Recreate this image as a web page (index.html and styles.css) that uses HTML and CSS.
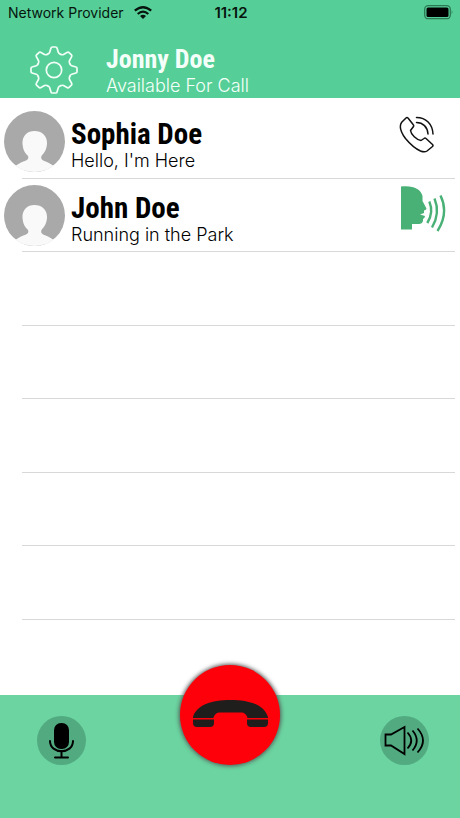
FILE: index.html
```html
<!DOCTYPE html>
<html lang="en">
<head>
<meta charset="utf-8">
<meta name="viewport" content="width=device-width, initial-scale=1">
<title>Contacts</title>
<link rel="stylesheet" href="styles.css">
</head>
<body>
<svg class="defs" aria-hidden="true">
  <symbol id="avatar" viewBox="0 0 61 61">
    <clipPath id="disc"><circle cx="30.5" cy="30.5" r="30.5"/></clipPath>
    <g clip-path="url(#disc)">
      <rect width="61" height="61" fill="#a9a9a9"/>
      <path d="M18.500 33C18 25 23 20 30.500 20S43.500 25 43 33C42.500 39 40 42 37.500 45C36 49 40 50 44 51.500L50 55V63H11V55L17 51.500C21 50 25.500 49 24 45C21 42 19 39 18.500 33Z" fill="#f9f9f9"/>
      <path d="M5 59L20 50.500V63H5ZM56 59L41 50.500V63H56Z" fill="#f9f9f9"/>
    </g>
  </symbol>
</svg>
<div class="app">
  <header class="top">
    <div class="status">
      <span class="carrier">Network Provider
        <svg width="18" height="13" viewBox="0 0 18 13" aria-hidden="true"><g fill="none" stroke="#07150e" stroke-width="2.300"><path d="M.8 4.700Q9-2.300 17.200 4.700"/><path d="M3.700 8Q9 3.300 14.300 8"/></g><path d="M6 10Q9 7.400 12 10L9 13Z" fill="#07150e"/></svg>
      </span>
      <time class="clock">11:12</time>
      <svg class="battery" width="30" height="15" viewBox="0 0 30 15" aria-hidden="true"><rect x=".7" y=".7" width="25.600" height="13" rx="3.500" fill="none" stroke="#2c7955" stroke-width="1.300"/><rect x="2.500" y="2.500" width="22" height="9.400" rx="1.500"/><path d="M27.700 5Q29.500 7.200 27.700 9.400Z" fill="#2c7955"/></svg>
    </div>
    <div class="profile">
      <button class="plain" aria-label="Settings">
        <svg width="48" height="48" viewBox="-24 -24 48 48" fill="none" stroke="#f2fff8" stroke-width="1.700" stroke-linejoin="round" stroke-linecap="round">
          <defs><path id="tooth" d="M-6.500-15.700Q-4.700-16.300-4.300-17.700L-3-22Q-2.700-23-1.700-23H1.700Q2.700-23 3-22L4.300-17.700Q4.700-16.300 6.500-15.700"/></defs>
          <use href="#tooth"/><use href="#tooth" transform="rotate(45)"/><use href="#tooth" transform="rotate(90)"/><use href="#tooth" transform="rotate(135)"/><use href="#tooth" transform="rotate(180)"/><use href="#tooth" transform="rotate(225)"/><use href="#tooth" transform="rotate(270)"/><use href="#tooth" transform="rotate(315)"/>
          <circle r="7.700"/>
        </svg>
      </button>
      <div class="info">
        <h1 class="name">Jonny Doe</h1>
        <p class="note">Available For Call</p>
      </div>
    </div>
  </header>
  <main class="main">
    <ul class="list">
      <li class="row">
        <svg class="avatar" aria-hidden="true"><use href="#avatar"/></svg>
        <div class="info">
          <h2 class="name">Sophia Doe</h2>
          <p class="note">Hello, I'm Here</p>
        </div>
        <button class="plain action" aria-label="Call Sophia Doe">
          <svg width="48" height="50" viewBox="0 2 48 50" fill="none" stroke="#111" stroke-width="1.500" stroke-linejoin="round" stroke-linecap="round">
            <path d="M8 9L3.700 13.300C1 17 2 22 7.500 29.500C12 35 17 39.500 22.500 42C25 43 27.500 43 29 42L34.500 37.500Q35.500 36.500 34.500 35.500L28 29.500Q27 28.700 26 29.500L23 31.500C18.500 31 13 25.500 12.500 21.500L15.500 17.500Q16 16.500 15.300 15.700L10 9Q9 8 8 9Z"/>
            <path d="M18.500 8.500C28 8.500 34.500 15 35 25"/><path d="M18.500 13.500C25 13.500 29.500 18 30 25"/>
          </svg>
        </button>
      </li>
      <li class="row">
        <svg class="avatar" aria-hidden="true"><use href="#avatar"/></svg>
        <div class="info">
          <h2 class="name">John Doe</h2>
          <p class="note">Running in the Park</p>
        </div>
        <button class="plain action" aria-label="Talk to John Doe">
          <svg width="48" height="50" viewBox="0 2 48 50">
            <path d="M3 3.500C15 2 23 6 24.500 13L24.500 18L28.500 25.500Q28.500 27 26 27.500V30L22 31.500L27 33Q27 35 25 36L25 38Q24 41.500 20 41H14V46.500H3Z" fill="#49b176"/>
            <g fill="none" stroke="#49b176" stroke-width="2.400"><path d="M31.300 18.500Q36 29.500 29.300 40"/><path d="M36.500 15.500Q42.500 30 34 44.500"/><path d="M42.500 12.500Q51 30 39.500 48"/></g>
          </svg>
        </button>
      </li>
      <li class="row"></li><li class="row"></li><li class="row"></li><li class="row"></li><li class="row"></li><li class="row"></li>
    </ul>
  </main>
  <footer class="bar">
    <button class="round mic" aria-label="Microphone">
      <svg width="49" height="49" viewBox="0 0 49 49"><rect x="17" y="7" width="15" height="26" rx="7"/><g fill="none" stroke="#000" stroke-width="2" stroke-linecap="round"><path d="M13 25C13 38.500 36 38.500 36 25M24.500 35V41M18 41.500H31"/></g></svg>
    </button>
    <button class="round hangup" aria-label="End call">
      <svg width="100" height="100" viewBox="0 0 100 100" fill="#201d1d"><path d="M13 52C17 40 31 35 50.500 35S84 40 88 52V53H67.500C67 49.500 64 47.500 61 47.500H40C37 47.500 34 49.500 33.500 53H13Z"/><path d="M13 54.500H34V58Q34 62 30 62H17Q13 62 13 58ZM67 54.500H88V58Q88 62 84 62H71Q67 62 67 58Z"/></svg>
    </button>
    <button class="round speaker" aria-label="Speaker">
      <svg width="49" height="49" viewBox="0 0 49 49" fill="none" stroke="#000" stroke-width="1.800"><path d="M5.500 18.500H11L24.500 11V38L11 29.500H5.500Z"/><path d="M27.500 16.500Q35 24.500 27.500 32.500M32.500 14.500Q41 24.500 32.500 34.500M37.500 12.500Q48.500 24.500 37.500 36.500"/></svg>
    </button>
  </footer>
</div>
</body>
</html>
```
FILE: styles.css
```css
* { box-sizing: border-box; }
body { margin: 0; background: #fff; color: #000; font-family: "Liberation Sans", Arial, sans-serif; }
h1, h2, p, ul { margin: 0; padding: 0; }
button { display: block; padding: 0; border: 0; background: none; cursor: pointer; }
svg { display: block; }
.defs { position: absolute; width: 0; height: 0; }
.app { display: flex; flex-direction: column; min-height: 100vh; }

.top { background: #55cf97; }
.status { display: grid; grid-template-columns: 1fr auto 1fr; align-items: center; height: 25px; padding: 0 6px 0 8px; color: #07150e; font-family: Inter, sans-serif; font-size: 14px; }
.carrier { display: flex; align-items: center; gap: 10px; white-space: nowrap; }
.clock { font-size: 15px; font-weight: 600; }
.battery { justify-self: end; }
.profile { display: flex; align-items: center; gap: 28px; height: 73px; padding: 16px 30px 0; }
.info { flex: 1; min-width: 0; }
.name { font-family: "Roboto Condensed", Roboto, sans-serif; font-size: 29px; line-height: 28px; font-weight: 700; }
.note { font-family: Inter, sans-serif; font-size: 18px; line-height: 26px; font-weight: 300; }
.profile .info { padding-top: 4px; }
.profile .name, .profile .note { color: #f5fffa; }
.profile .name { font-size: 26px; }

.main { display: flex; flex: 1; padding: 7px 5px 2px 4px; }
.list { display: grid; flex: 1; grid-template-rows: repeat(8, minmax(73px, 1fr)); list-style: none; }
.row { display: flex; align-items: flex-start; gap: 6px; padding-top: 6px; background: linear-gradient(#d8d8d8, #d8d8d8) 18px 100% / 100% 1px no-repeat; }
.row:last-child { background: none; }
.row .info { padding-top: 9px; }
.avatar { width: 61px; height: 61px; }
.action { margin-right: 9px; }

.bar { display: grid; grid-template-columns: 1fr auto 1fr; align-items: start; height: 123px; padding: 21px 31px 0; background: #6bd4a0; }
.round { border-radius: 50%; background: #52ab80; }
.mic { justify-self: start; margin-left: 6px; }
.speaker { justify-self: end; }
.hangup { margin-top: -51px; background: #fe0009; box-shadow: 0 0 4px 1px #555; }
```
